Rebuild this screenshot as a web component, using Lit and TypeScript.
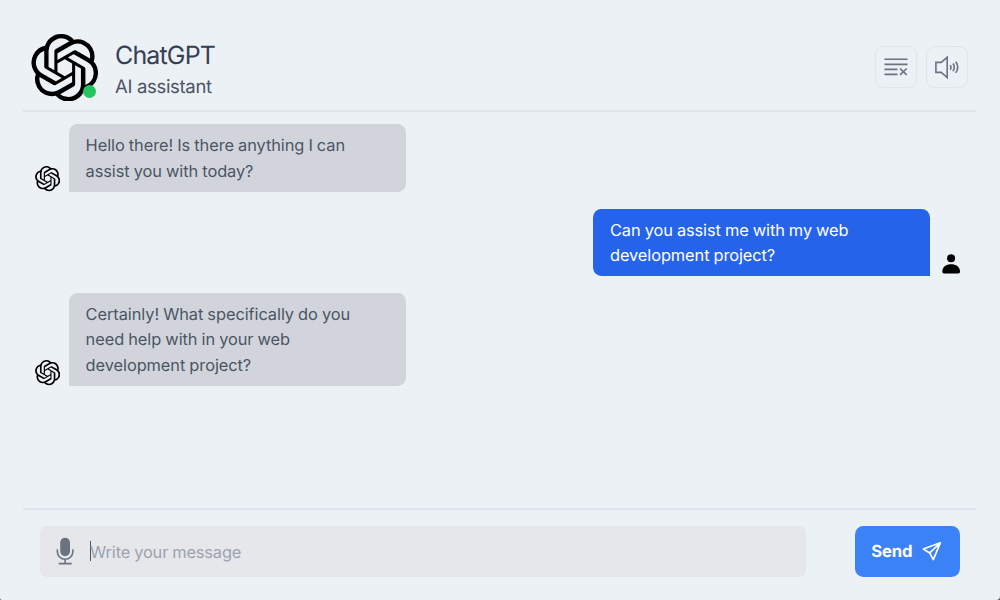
import { LitElement, html, css, svg } from "lit";
import { customElement } from "lit/decorators.js";

const knot = svg`<path fill="currentColor" d="M22.2819 9.8211a5.9847 5.9847 0 0 0-.5157-4.9108 6.0462 6.0462 0 0 0-6.5098-2.9A6.0651 6.0651 0 0 0 4.9807 4.1818a5.9847 5.9847 0 0 0-3.9977 2.9 6.0462 6.0462 0 0 0 .7427 7.0966 5.98 5.98 0 0 0 .511 4.9107 6.051 6.051 0 0 0 6.5146 2.9001A5.9847 5.9847 0 0 0 13.2599 24a6.0557 6.0557 0 0 0 5.7718-4.2058 5.9894 5.9894 0 0 0 3.9977-2.9001 6.0557 6.0557 0 0 0-.7475-7.0729zm-9.022 12.6081a4.4755 4.4755 0 0 1-2.8764-1.0408l.1419-.0804 4.7783-2.7582a.7948.7948 0 0 0 .3927-.6813v-6.7369l2.02 1.1686a.071.071 0 0 1 .038.052v5.5826a4.504 4.504 0 0 1-4.4945 4.4944zm-9.6607-4.1254a4.4708 4.4708 0 0 1-.5346-3.0137l.142.0852 4.783 2.7582a.7712.7712 0 0 0 .7806 0l5.8428-3.3685v2.3324a.0804.0804 0 0 1-.0332.0615L9.74 19.9502a4.4992 4.4992 0 0 1-6.1408-1.6464zM2.3408 7.8956a4.485 4.485 0 0 1 2.3655-1.9728V11.6a.7664.7664 0 0 0 .3879.6765l5.8144 3.3543-2.0201 1.1685a.0757.0757 0 0 1-.071 0l-4.8303-2.7865A4.504 4.504 0 0 1 2.3408 7.872zm16.5963 3.8558L13.1038 8.364 15.1192 7.2a.0757.0757 0 0 1 .071 0l4.8303 2.7913a4.4944 4.4944 0 0 1-.6765 8.1042v-5.6772a.79.79 0 0 0-.407-.667zm2.0107-3.0231l-.142-.0852-4.7735-2.7818a.7759.7759 0 0 0-.7854 0L9.409 9.2297V6.8974a.0662.0662 0 0 1 .0284-.0615l4.8303-2.7866a4.4992 4.4992 0 0 1 6.6802 4.66zM8.3065 12.863l-2.02-1.1638a.0804.0804 0 0 1-.038-.0567V6.0742a4.4992 4.4992 0 0 1 7.3757-3.4537l-.142.0805L8.704 5.459a.7948.7948 0 0 0-.3927.6813zm1.0976-2.3654l2.602-1.4998 2.6069 1.4998v2.9994l-2.5974 1.4997-2.6067-1.4997Z"/>`;

interface Message {
  from: "bot" | "user";
  lines: string[];
}

const messages: Message[] = [
  { from: "bot", lines: ["Hello there! Is there anything I can", "assist you with today?"] },
  { from: "user", lines: ["Can you assist me with my web", "development project?"] },
  { from: "bot", lines: ["Certainly! What specifically do you", "need help with in your web", "development project?"] },
];

@customElement("app-root")
export class AppRoot extends LitElement {
  static styles = css`
    :host {
      display: block;
      width: 1000px;
      height: 600px;
      background: #55585c;
      font-family: Inter, "Liberation Sans", sans-serif;
      text-rendering: geometricPrecision;
    }
    * { box-sizing: border-box; }
    svg { display: block; flex: none; }
    .page {
      display: flex;
      flex-direction: column;
      height: 600px;
      padding: 22px 24px 23px 23px;
      background: #ecf1f6;
      border-radius: 0 0 4px 2px;
      overflow: hidden;
    }
    .header {
      display: flex;
      align-items: flex-start;
      height: 89.5px;
      padding: 11.5px 8.5px 0 8px;
      border-bottom: 2px solid #e0e4eb;
    }
    .brand { position: relative; color: #000; }
    .dot {
      position: absolute;
      right: 3px;
      bottom: 3px;
      width: 13px;
      height: 13px;
      border-radius: 50%;
      background: #22c55e;
    }
    .titles { flex: 1; margin-left: 16.5px; }
    .name {
      margin-top: 6.5px;
      font-size: 25px;
      line-height: 32px;
      letter-spacing: -0.85px;
      color: #364054;
    }
    .role {
      font-size: 18.5px;
      line-height: 30px;
      letter-spacing: -0.32px;
      color: #4b5563;
    }
    .tools { display: flex; gap: 8.5px; margin-top: 12.7px; }
    .tool {
      display: grid;
      place-items: center;
      width: 42px;
      height: 42px;
      border: 1px solid #e0e5ee;
      border-radius: 8.5px;
      color: #6b7280;
    }
    .thread {
      display: flex;
      flex: 1;
      flex-direction: column;
      gap: 16.9px;
      padding: 12.8px 12px 0 12px;
    }
    .row { display: flex; align-items: flex-end; gap: 8.5px; }
    .row.user { justify-content: flex-end; }
    .bubble {
      width: 337px;
      padding: 9.2px 16.8px 7.6px;
      border-radius: 8.4px 8.4px 8.4px 0;
      background: #d1d5db;
      color: #4b5563;
      font-size: 16.4px;
      line-height: 25.3px;
      letter-spacing: -0.08px;
      word-spacing: -0.4px;
    }
    .user .bubble {
      border-radius: 8.4px 8.4px 0 8.4px;
      background: #2563eb;
      color: #fff;
      letter-spacing: -0.1px;
    }
    .line { display: block; white-space: nowrap; }
    .composer {
      display: flex;
      gap: 49px;
      height: 69.4px;
      padding: 16.5px 16.5px 0;
      border-top: 2px solid #dfe5ee;
    }
    .field {
      display: flex;
      flex: 1;
      align-items: center;
      height: 50.5px;
      padding-left: 15px;
      border-radius: 6.5px;
      background: #e5e7eb;
      color: #9ca3af;
      font-size: 16.4px;
      letter-spacing: -0.15px;
      word-spacing: -0.4px;
    }
    .caret { width: 1px; height: 20px; margin-left: 15px; background: #4b5563; }
    .hint { margin: 1px 0 0 -0.4px; }
    .send {
      display: flex;
      align-items: center;
      width: 105px;
      height: 50.5px;
      padding-left: 16.8px;
      border-radius: 8.4px;
      background: #3b82f6;
      color: #fff;
      font-size: 16.7px;
      font-weight: 700;
      letter-spacing: -0.2px;
    }
    .label { margin-top: 2px; }
    .plane { margin-left: 9.2px; }
  `;

  private knotIcon(size: number) {
    return html`<svg width=${size} height=${size} viewBox="0 0 24 24">${knot}</svg>`;
  }

  private personIcon() {
    return html`<svg width="25.3" height="25.3" viewBox="0 0 25.3 25.3">
      <circle cx="12.1" cy="7.3" r="4" />
      <path d="M3.3 20.5c0-4.6 4-7.2 8.8-7.2s8.9 2.6 8.9 7.2c0 1.2-.6 1.9-1.8 1.9H5.1C3.9 22.4 3.3 21.7 3.3 20.5Z" />
    </svg>`;
  }

  render() {
    return html`
      <div class="page">
        <div class="header">
          <div class="brand">${this.knotIcon(67.5)}<span class="dot"></span></div>
          <div class="titles">
            <div class="name">ChatGPT</div>
            <div class="role">AI assistant</div>
          </div>
          <div class="tools">
            <div class="tool">
              <svg width="26" height="26" viewBox="0 0 26 26" fill="none" stroke="currentColor" stroke-width="1.6">
                <path d="M1.5 5.3h23M1.5 10.4h23M1.5 15.4h13M1.5 20.4h13M17 14.5l6.7 6.4M23.7 14.5L17 20.9" />
              </svg>
            </div>
            <div class="tool">
              <svg width="26" height="26" viewBox="0 0 26 26" fill="none" stroke="currentColor" stroke-width="1.6">
                <path d="M1.9 8.4h5.3l6-5.1v20.2l-6-5.1H1.9Z" />
                <path d="M16.2 11.2q1.6 2.2 0 4.5M19 9.5q2.6 3.8 0 7.8M21.8 7.8q3.8 5.5 0 11.1" />
              </svg>
            </div>
          </div>
        </div>
        <div class="thread">
          ${messages.map(
            (m) => html`<div class="row ${m.from}">
              ${m.from === "bot" ? this.knotIcon(25.3) : ""}
              <div class="bubble">${m.lines.map((l) => html`<span class="line">${l}</span>`)}</div>
              ${m.from === "user" ? this.personIcon() : ""}
            </div>`
          )}
        </div>
        <div class="composer">
          <div class="field">
            <svg width="20" height="28" viewBox="0 0 20 28" fill="none" stroke="#6b7280" stroke-width="1.6">
              <rect x="5.2" y="0.8" width="9.8" height="18.4" rx="4.9" fill="#6b7280" stroke="none" />
              <path d="M2.3 12.3v2.2a7.8 7.8 0 0 0 15.6 0v-2.2M10.1 22.3v4.4M3.7 26.6h13" />
            </svg>
            <span class="caret"></span><span class="hint">Write your message</span>
          </div>
          <div class="send">
            <span class="label">Send</span>
            <svg class="plane" width="22" height="22" viewBox="0 0 22 22" fill="none" stroke="currentColor" stroke-width="1.7" stroke-linejoin="round" stroke-linecap="round">
              <path d="M19.3 2.8L2.3 9l6.4 3.9L12.3 19.6ZM19.3 2.8L8.7 12.9" />
            </svg>
          </div>
        </div>
      </div>
    `;
  }
}
